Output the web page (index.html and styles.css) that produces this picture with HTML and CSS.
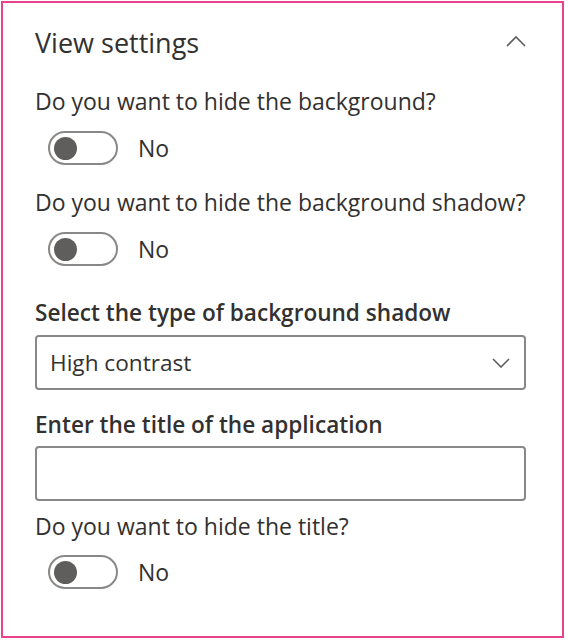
FILE: index.html
```html
<!DOCTYPE html>
<html lang="en">
<head>
    <meta charset="utf-8">
    <title>View settings</title>
    <link rel="stylesheet" href="styles.css">
</head>
<body>
    <div class="panel">
        <div class="group-head">
            <h2 class="group-title">View settings</h2>
            <svg class="chevron-up" width="20" height="12" viewBox="0 0 20 12"><path d="M1 11 L10 2 L19 11" fill="none" stroke="#605e5c" stroke-width="1.6"/></svg>
        </div>

        <div class="field field-first">
            <p class="question">Do you want to hide the background?</p>
            <div class="toggle"><span class="pill"><span class="thumb"></span></span><span class="state">No</span></div>
        </div>

        <div class="field field-toggle">
            <p class="question">Do you want to hide the background shadow?</p>
            <div class="toggle"><span class="pill"><span class="thumb"></span></span><span class="state">No</span></div>
        </div>

        <div class="field field-wide">
            <label class="label">Select the type of background shadow</label>
            <div class="box dropdown">
                <span>High contrast</span>
                <svg width="18" height="10" viewBox="0 0 18 10"><path d="M1 1 L9 9 L17 1" fill="none" stroke="#605e5c" stroke-width="1.6"/></svg>
            </div>
        </div>

        <div class="field field-text">
            <label class="label">Enter the title of the application</label>
            <div class="box box-input"></div>
        </div>

        <div class="field field-last">
            <p class="question">Do you want to hide the title?</p>
            <div class="toggle toggle-last"><span class="pill"><span class="thumb"></span></span><span class="state">No</span></div>
        </div>
    </div>
</body>
</html>
```

FILE: styles.css
```css
*{margin:0;padding:0;box-sizing:border-box;}
body{font-family:"Open Sans","Noto Sans",sans-serif;color:#323130;background:#fff;}

.panel{width:563px;height:637px;margin:1px;border:2px solid #e8428c;padding:22px 36px 0 32px;}

.group-head{display:flex;align-items:center;justify-content:space-between;height:36px;}
.group-title{font-size:27px;font-weight:400;line-height:36px;}
.chevron-up{margin-top:-4px;}

.question,.label{font-size:23px;line-height:30px;}
.label{display:block;font-size:22.6px;font-weight:600;}

.field-first{margin-top:25px;}
.field-toggle{margin-top:22px;}
.field-wide{margin-top:32px;}
.field-text{margin-top:20px;}
.field-last{margin-top:10px;}

.toggle{display:flex;align-items:center;gap:20px;margin-top:15px;padding-left:13px;height:34px;}
.toggle-last{margin-top:14px;}
.pill{display:flex;align-items:center;width:70px;height:34px;border:2px solid #8a8886;border-radius:17px;padding-left:4px;}
.thumb{width:23px;height:23px;border-radius:50%;background:#605e5c;}
.state{font-size:23px;line-height:30px;}

.box{height:55px;margin-top:7px;border:2px solid #8a8886;border-radius:4px;}
.box-input{margin-top:6px;}
.dropdown{display:flex;align-items:center;justify-content:space-between;padding:0 14px 0 13px;font-size:22.6px;}
```
